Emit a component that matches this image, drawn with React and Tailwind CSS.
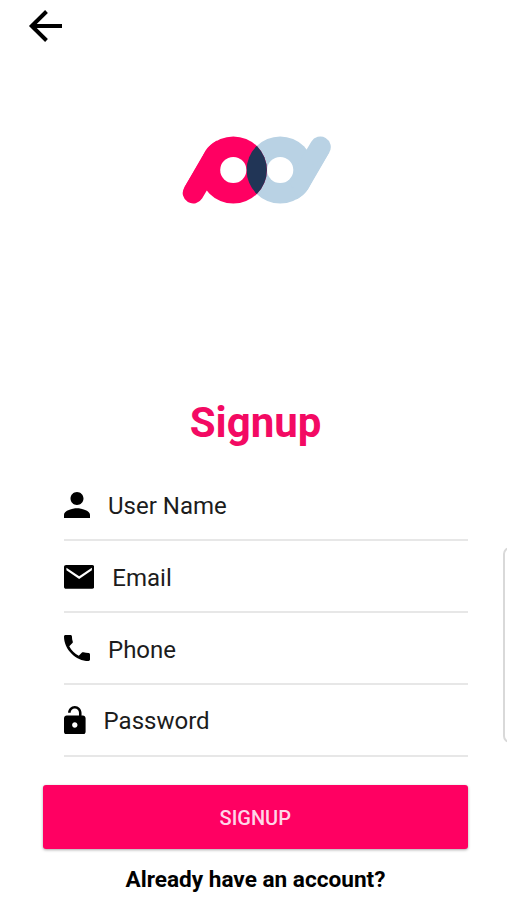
const fields = [
  {
    label: "User Name",
    viewBox: "64 64 384 384",
    size: "w-[26px] h-[26px] mb-[21.5px]",
    path: "M256 256c52.805 0 96-43.201 96-96s-43.195-96-96-96-96 43.201-96 96 43.195 96 96 96zm0 48c-63.598 0-192 32.402-192 96v48h384v-48c0-63.598-128.402-96-192-96z",
  },
  {
    label: "Email",
    viewBox: "32 80 448 352",
    size: "w-[30.3px] h-[23.8px] mb-[22.5px]",
    path: "M448 80H64C44 80 32 92 32 112v288c0 20 12 32 32 32h384c20 0 32-12 32-32V112c0-20-12-32-32-32zM444 158L256 286 68 158V122L256 246 444 122z",
  },
  {
    label: "Phone",
    viewBox: "64 64 384 384",
    size: "w-[26px] h-[26px] mb-[21.5px]",
    path: "M426.666 330.667a250.385 250.385 0 0 1-75.729-11.729c-7.469-2.136-16-1.073-21.332 5.333l-46.939 46.928c-60.802-30.928-109.864-80-140.802-140.803l46.939-46.927c5.332-5.333 7.462-13.864 5.332-21.333-8.537-24.531-12.802-50.136-12.802-76.803C181.333 73.604 171.734 64 160 64H85.333C73.599 64 64 73.604 64 85.333 64 274.656 237.344 448 426.667 448 438.4 448 448 438.396 448 426.667v-74.666c0-11.73-9.599-21.334-21.334-21.334z",
  },
  {
    label: "Password",
    viewBox: "96 46 320 420",
    size: "w-[21.6px] h-[28.4px] mb-[20.5px]",
    path: "M376 186h-20v-40c0-55-45-100-100-100S156 91 156 146h37.998c0-34.004 28.003-62.002 62.002-62.002 34.004 0 62.002 27.998 62.002 62.002v40H136c-22.002 0-40 17.998-40 40v200c0 22.002 17.998 40 40 40h240c22.002 0 40-17.998 40-40V226c0-22.002-17.998-40-40-40zM256 368c-22.002 0-40-17.998-40-40s17.998-40 40-40 40 17.998 40 40-17.998 40-40 40z",
  },
];

function LoopShape({ color }) {
  return (
    <>
      <circle cx="233.3" cy="170" r="33.6" fill={color} />
      <path d="M193.2 193L213.3 159" stroke={color} strokeWidth="21" strokeLinecap="round" />
      <path d="M184 187.9L205.5 150.8Q208.9 145.1 217 140.6L222 160Z" fill={color} />
    </>
  );
}

function Logo() {
  return (
    <svg className="h-[70px] w-[150px]" viewBox="182 135 150 70" aria-label="Logo">
      <defs>
        <clipPath id="left-disc">
          <circle cx="233.3" cy="170" r="33.6" />
        </clipPath>
      </defs>
      <g transform="rotate(180 256.75 170)">
        <LoopShape color="#b9d2e4" />
      </g>
      <LoopShape color="#ff0062" />
      <circle cx="280.2" cy="170" r="33.6" fill="#213556" clipPath="url(#left-disc)" />
      <circle cx="233.3" cy="170" r="13.1" fill="#fff" />
      <circle cx="280.2" cy="170" r="13.1" fill="#fff" />
    </svg>
  );
}

export default function App() {
  return (
    <main className="relative flex h-[900px] w-[507px] flex-col overflow-hidden bg-white font-[Roboto,sans-serif] text-black">
      <header className="h-[135px] pt-[9px] pl-[28px]">
        <button aria-label="Back" className="block">
          <svg className="h-[34px] w-[35px]" viewBox="0 0 35 34" fill="none" stroke="black" strokeWidth="4">
            <path d="M18.5 2.5L3.8 17L18.5 31.5M4 17H34" />
          </svg>
        </button>
      </header>
      <div className="flex h-[263px] justify-center pl-[6px]">
        <Logo />
      </div>
      <h1 className="h-[71.6px] pl-1 text-center text-[42px] leading-[50px] font-bold text-[#f30a63]">
        Signup
      </h1>
      <form className="mr-[39px] ml-[64px]">
        {fields.map((f) => (
          <div key={f.label} className="flex h-[71.8px] items-end border-b-2 border-[#e7e7e7]">
            <svg className={`shrink-0 ${f.size}`} viewBox={f.viewBox} preserveAspectRatio="none">
              <path d={f.path} fillRule="evenodd" />
            </svg>
            <span className="mb-[18.4px] ml-[18px] text-[24px] leading-[30px] text-[#1c1c1c]">{f.label}</span>
          </div>
        ))}
      </form>
      <button className="mt-[28.4px] mr-[39px] ml-[42.5px] h-[64px] shrink-0 rounded-[3px] bg-[#ff0062] pt-[1px] text-[20px] font-medium text-[#ffd5e8] shadow-[0_1px_3px_rgba(0,0,0,0.35)]">
        SIGNUP
      </button>
      <p className="mt-[16px] pl-1 text-center text-[22.6px] leading-[30px] font-bold">Already have an account?</p>
      <div className="absolute top-[547px] -right-[10px] h-[196px] w-[14px] rounded-l-[7px] border-2 border-[#d9d9d9] bg-white" />
    </main>
  );
}
